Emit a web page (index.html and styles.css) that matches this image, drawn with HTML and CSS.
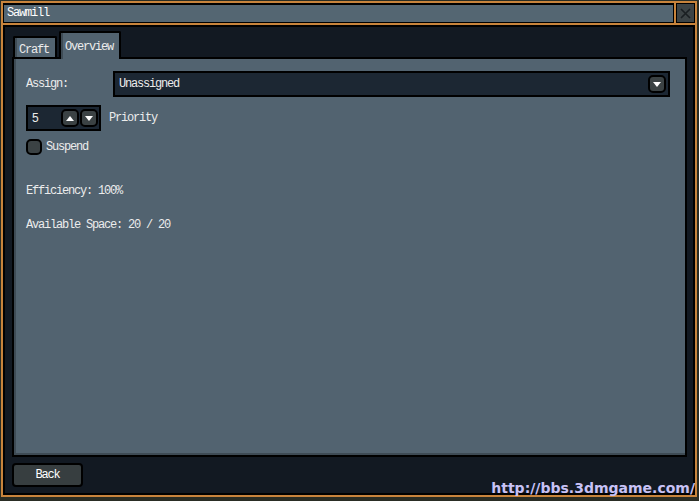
FILE: index.html
```html
<!DOCTYPE html>
<html>
<head>
<meta charset="utf-8">
<link rel="stylesheet" href="styles.css">
</head>
<body>
<div class="window">
  <div class="titlerow">
    <div class="title">Sawmill</div>
    <div class="close">
      <svg width="13" height="13" viewBox="0 0 13 13"><path d="M2 2 L11 11 M11 2 L2 11" stroke="#1a1f22" stroke-width="1.6" fill="none"/></svg>
    </div>
  </div>
  <div class="body">
    <div class="tabs">
      <div class="tab">Craft</div>
      <div class="tab active">Overview</div>
    </div>
    <div class="panel">
      <div class="row">
        <span class="label">Assign:</span>
        <div class="dropdown">
          <span>Unassigned</span>
          <span class="ibtn"><svg width="8" height="5" viewBox="0 0 8 5"><path d="M0 0 H8 L4 5 Z" fill="#fff"/></svg></span>
        </div>
      </div>
      <div class="row">
        <div class="spinner">
          <span class="val">5</span>
          <span class="ibtn"><svg width="8" height="5" viewBox="0 0 8 5"><path d="M0 5 H8 L4 0 Z" fill="#fff"/></svg></span>
          <span class="ibtn"><svg width="8" height="5" viewBox="0 0 8 5"><path d="M0 0 H8 L4 5 Z" fill="#fff"/></svg></span>
        </div>
        <span class="plabel">Priority</span>
      </div>
      <div class="row check">
        <span class="box"></span>
        <span>Suspend</span>
      </div>
      <p class="stat first">Efficiency: 100%</p>
      <p class="stat">Available Space: 20 / 20</p>
    </div>
    <div class="footer">
      <div class="back">Back</div>
    </div>
  </div>
  <div class="watermark">http://bbs.3dmgame.com/</div>
</div>
</body>
</html>
```

FILE: styles.css
```css
html, body {
  margin: 0;
  padding: 0;
}
body {
  width: 699px;
  height: 501px;
  background: #2a2d24;
  overflow: hidden;
  font-family: "Liberation Mono", monospace;
  font-size: 12px;
  letter-spacing: -1.2px;
  color: #ececec;
}
.window {
  position: relative;
  margin: 1px 0 0 1px;
  width: 696px;
  height: 496px;
  box-sizing: border-box;
  padding: 2px;
  background: #c8843c;
  display: flex;
  flex-direction: column;
  gap: 2px;
}
.titlerow {
  display: flex;
  gap: 2px;
  height: 20px;
}
.title {
  flex: 1;
  box-sizing: border-box;
  border: 1px solid #000;
  border-top-width: 2px;
  background: #546672;
  padding-left: 3px;
  line-height: 16px;
  color: #fff;
}
.close {
  width: 19px;
  box-sizing: border-box;
  border: 1px solid #000;
  background: #3c4345;
  display: flex;
  align-items: center;
  justify-content: center;
}
.body {
  flex: 1;
  box-sizing: border-box;
  border: 2px solid #000;
  background: #121922;
  padding: 4px 6px 6px 7px;
  display: flex;
  flex-direction: column;
}
.tabs {
  display: flex;
  align-items: flex-end;
  gap: 2px;
  height: 28px;
  margin-left: 1px;
  margin-bottom: -2px;
  position: relative;
  z-index: 1;
}
.tab {
  box-sizing: border-box;
  width: 44px;
  height: 21px;
  border: 2px solid #000;
  border-bottom: none;
  border-radius: 2px 2px 0 0;
  background: #526370;
  box-shadow: inset 2px 0 0 #3e4b55;
  padding: 5px 0 0 4px;
  line-height: 14px;
  margin-bottom: 2px;
}
.tab.active {
  width: 62px;
  height: 28px;
  margin-bottom: 0;
  padding: 7px 0 0 4px;
}
.panel {
  flex: 1;
  box-sizing: border-box;
  border: 2px solid #000;
  background: #526370;
  box-shadow: inset 2px -2px 0 #3e4b55;
  padding: 12px 15px 0 12px;
  display: flex;
  flex-direction: column;
  gap: 8px;
}
.row {
  display: flex;
  align-items: center;
}
.label {
  width: 87px;
  flex: none;
}
.dropdown {
  flex: 1;
  height: 26px;
  box-sizing: border-box;
  border: 2px solid #000;
  background: #1c2733;
  display: flex;
  align-items: center;
  justify-content: space-between;
  padding: 0 2px 0 4px;
}
.ibtn {
  width: 18px;
  height: 18px;
  box-sizing: border-box;
  border: 2px solid #000;
  border-radius: 5px;
  background: #3b4244;
  display: flex;
  align-items: center;
  justify-content: center;
}
.spinner {
  width: 75px;
  height: 26px;
  box-sizing: border-box;
  border: 2px solid #000;
  background: #1c2733;
  display: flex;
  align-items: center;
  gap: 1px;
  padding-left: 4px;
}
.spinner .val {
  width: 28px;
  font-family: "Liberation Sans", sans-serif;
  letter-spacing: 0;
}
.plabel {
  margin-left: 8px;
}
.check {
  gap: 4px;
}
.box {
  width: 16px;
  height: 16px;
  box-sizing: border-box;
  border: 2px solid #000;
  border-radius: 5px;
  background: #3b4244;
}
.stat {
  margin: 0;
  line-height: 14px;
}
.stat.first {
  margin-top: 21px;
}
.stat + .stat {
  margin-top: 12px;
}
.footer {
  margin-top: 6px;
  display: flex;
}
.back {
  width: 71px;
  height: 24px;
  box-sizing: border-box;
  border: 2px solid #000;
  border-radius: 4px;
  background: #373e40;
  display: flex;
  align-items: center;
  justify-content: center;
  color: #fff;
}
.watermark {
  position: absolute;
  right: 2px;
  bottom: 2px;
  font-family: "DejaVu Sans", sans-serif;
  font-weight: bold;
  font-size: 14px;
  letter-spacing: 0;
  line-height: 14px;
  color: #c8c2f6;
}
```
